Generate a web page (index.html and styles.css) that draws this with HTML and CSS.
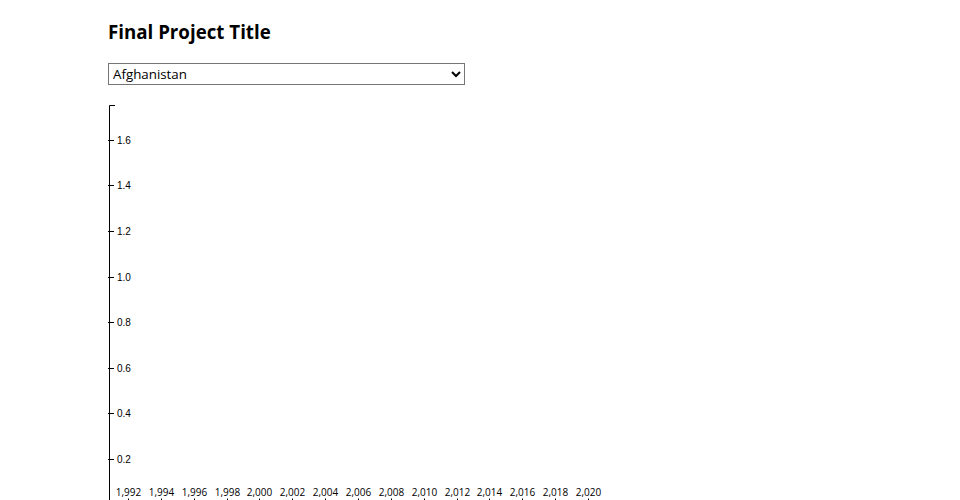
FILE: index.html
```html
<!DOCTYPE html>
<html>
<head>
<meta charset="utf-8">
<link rel="stylesheet" href="styles.css">
</head>
<body>
<div class="page">
  <h1 class="title">Final Project Title</h1>
  <select class="country">
    <option>Afghanistan</option>
  </select>
  <svg class="chart" width="600" height="420" viewBox="0 0 600 420">
    <g class="y-axis">
      <path class="domain" d="M7,5.5H1.5V420"/>
      <g transform="translate(0,40.5)"><line x2="6"/><text x="9" dy=".32em">1.6</text></g>
      <g transform="translate(0,85.5)"><line x2="6"/><text x="9" dy=".32em">1.4</text></g>
      <g transform="translate(0,131.5)"><line x2="6"/><text x="9" dy=".32em">1.2</text></g>
      <g transform="translate(0,177.5)"><line x2="6"/><text x="9" dy=".32em">1.0</text></g>
      <g transform="translate(0,222.5)"><line x2="6"/><text x="9" dy=".32em">0.8</text></g>
      <g transform="translate(0,268.5)"><line x2="6"/><text x="9" dy=".32em">0.6</text></g>
      <g transform="translate(0,313.5)"><line x2="6"/><text x="9" dy=".32em">0.4</text></g>
      <g transform="translate(0,359.5)"><line x2="6"/><text x="9" dy=".32em">0.2</text></g>
    </g>
    <g class="x-axis">
      <g transform="translate(20.5,0)"><text y="396">1,992</text><line y1="398.5" y2="404"/></g>
      <g transform="translate(53.5,0)"><text y="396">1,994</text><line y1="398.5" y2="404"/></g>
      <g transform="translate(86.5,0)"><text y="396">1,996</text><line y1="398.5" y2="404"/></g>
      <g transform="translate(119.5,0)"><text y="396">1,998</text><line y1="398.5" y2="404"/></g>
      <g transform="translate(151.5,0)"><text y="396">2,000</text><line y1="398.5" y2="404"/></g>
      <g transform="translate(184.5,0)"><text y="396">2,002</text><line y1="398.5" y2="404"/></g>
      <g transform="translate(217.5,0)"><text y="396">2,004</text><line y1="398.5" y2="404"/></g>
      <g transform="translate(250.5,0)"><text y="396">2,006</text><line y1="398.5" y2="404"/></g>
      <g transform="translate(283.5,0)"><text y="396">2,008</text><line y1="398.5" y2="404"/></g>
      <g transform="translate(316.5,0)"><text y="396">2,010</text><line y1="398.5" y2="404"/></g>
      <g transform="translate(349.5,0)"><text y="396">2,012</text><line y1="398.5" y2="404"/></g>
      <g transform="translate(381.5,0)"><text y="396">2,014</text><line y1="398.5" y2="404"/></g>
      <g transform="translate(414.5,0)"><text y="396">2,016</text><line y1="398.5" y2="404"/></g>
      <g transform="translate(447.5,0)"><text y="396">2,018</text><line y1="398.5" y2="404"/></g>
      <g transform="translate(480.5,0)"><text y="396">2,020</text><line y1="398.5" y2="404"/></g>
    </g>
  </svg>
</div>
</body>
</html>
```
FILE: styles.css
```css
html, body {
  margin: 0;
  padding: 0;
  background: #fff;
}
.page {
  padding: 18px 0 0 108px;
  font-family: "Open Sans", sans-serif;
  color: #000;
}
.title {
  margin: 0;
  font-size: 18.72px;
  line-height: 28px;
  font-weight: 700;
}
.country {
  display: block;
  margin-top: 17px;
  width: 357px;
  height: 22px;
  font-family: "Open Sans", sans-serif;
  font-size: 13.33px;
  color: #000;
  background: #fff;
  border: 1px solid #767676;
  border-radius: 0;
  padding: 0;
}
.chart {
  display: block;
  margin-top: 15px;
  overflow: visible;
}
.y-axis .domain {
  fill: none;
  stroke: #000;
  stroke-width: 1;
}
.y-axis line {
  stroke: #000;
}
.y-axis text {
  font-family: "Liberation Sans", Arial, sans-serif;
  font-size: 10px;
  fill: #000;
}
.x-axis text {
  font-family: "Open Sans", sans-serif;
  font-size: 10px;
  fill: #000;
  text-anchor: middle;
}
.x-axis line {
  stroke: #000;
  stroke-width: 1;
}
```
